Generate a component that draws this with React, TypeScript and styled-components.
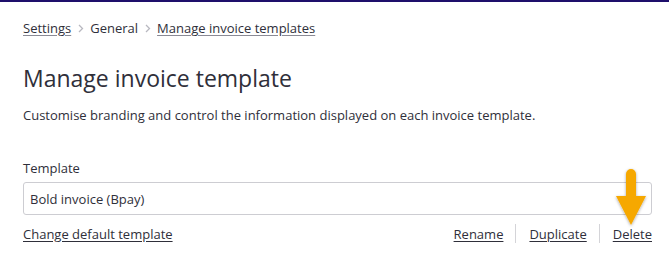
import React from "react";
import styled, { createGlobalStyle } from "styled-components";

const Global = createGlobalStyle`
  html, body { margin: 0; padding: 0; background: #fff; }
  body { font-family: "Open Sans", "Noto Sans", sans-serif; color: #2f2f3a; }
  * { box-sizing: border-box; }
`;

const Page = styled.div`
  border-top: 2px solid #1e0f6b;
  padding: 17px 17px 0 23px;
  width: 669px;
  height: 258px;
  overflow: hidden;
`;

const Crumbs = styled.nav`
  display: flex;
  align-items: center;
  gap: 6.5px;
  font-size: 13px;
  line-height: 18px;
`;

const CrumbLink = styled.a`
  color: #2f2f3a;
  text-decoration: underline;
  text-decoration-color: #8a8a95;
  text-underline-offset: 2px;
`;

const CrumbText = styled.span`
  color: #2f2f3a;
`;

const Chevron = styled.span`
  display: inline-flex;
  color: #b8b8c0;
`;

const Title = styled.h1`
  margin: 25px 0 0;
  font-size: 23px;
  font-weight: 400;
  line-height: 32px;
  color: #2f2f3a;
`;

const Desc = styled.p`
  margin: 12px 0 0;
  font-size: 13px;
  line-height: 18px;
`;

const Label = styled.div`
  margin-top: 35px;
  font-size: 13px;
  line-height: 18px;
`;

const FieldWrap = styled.div`
  position: relative;
  margin-top: 5px;
`;

const Input = styled.div`
  height: 33px;
  border: 1px solid #cdcdd2;
  border-radius: 3px;
  padding: 0 6px;
  display: flex;
  align-items: center;
  font-size: 13px;
`;

const Actions = styled.div`
  display: flex;
  justify-content: space-between;
  align-items: center;
  margin-top: 9px;
  font-size: 13px;
  line-height: 18px;
`;

const Link = styled.a`
  color: #2f2f3a;
  text-decoration: underline;
  text-underline-offset: 2px;
`;

const ActionGroup = styled.div`
  display: flex;
  align-items: center;
`;

const ActionItem = styled.div<{ $first?: boolean }>`
  padding: 0 0 0 ${(p) => (p.$first ? 0 : 13)}px;
  margin-left: ${(p) => (p.$first ? 0 : 12)}px;
  border-left: ${(p) => (p.$first ? "none" : "1px solid #d4d4d8")};
  height: 19px;
  display: flex;
  align-items: center;
`;

const Arrow = styled.svg`
  position: absolute;
  left: 590px;
  top: -13px;
  overflow: visible;
`;

const ChevronIcon = () => (
  <svg width="6" height="9" viewBox="0 0 6 9">
    <path d="M1 1l3.5 3.5L1 8" fill="none" stroke="currentColor" strokeWidth="1.3" />
  </svg>
);

export default function App() {
  return (
    <>
      <Global />
      <Page>
        <Crumbs>
          <CrumbLink>Settings</CrumbLink>
          <Chevron><ChevronIcon /></Chevron>
          <CrumbText>General</CrumbText>
          <Chevron><ChevronIcon /></Chevron>
          <CrumbLink>Manage invoice templates</CrumbLink>
        </Crumbs>
        <Title>Manage invoice template</Title>
        <Desc>Customise branding and control the information displayed on each invoice template.</Desc>
        <Label>Template</Label>
        <FieldWrap>
          <Input>Bold invoice (Bpay)</Input>
          <Arrow width="36" height="56" viewBox="0 0 36 56">
            <defs>
              <filter id="sh" x="-50%" y="-50%" width="200%" height="200%">
                <feDropShadow dx="0" dy="1" stdDeviation="1.5" floodColor="#000" floodOpacity="0.35" />
              </filter>
            </defs>
            <g filter="url(#sh)" fill="#f6a800">
              <path d="M13 5a5 5 0 0 1 10 0v22h-10z" />
              <path d="M3 27h30l-15 29z" />
            </g>
          </Arrow>
        </FieldWrap>
        <Actions>
          <Link>Change default template</Link>
          <ActionGroup>
            <ActionItem $first><Link>Rename</Link></ActionItem>
            <ActionItem><Link>Duplicate</Link></ActionItem>
            <ActionItem><Link>Delete</Link></ActionItem>
          </ActionGroup>
        </Actions>
      </Page>
    </>
  );
}
